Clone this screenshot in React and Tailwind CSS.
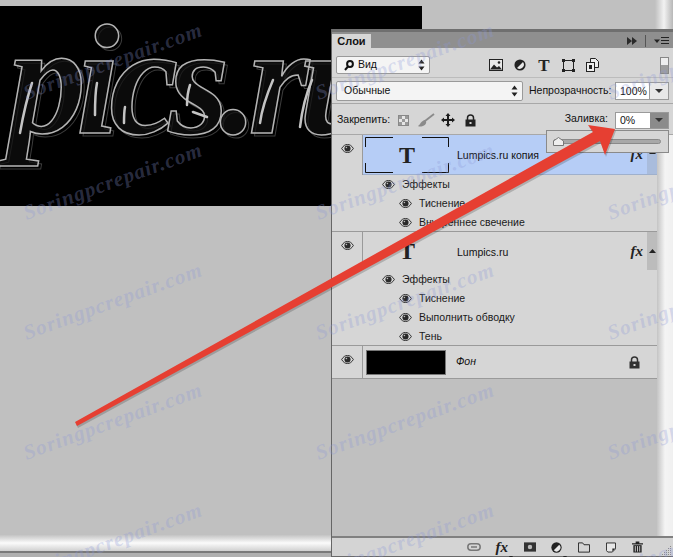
const FONT = "font-['Liberation_Sans',sans-serif]"

// watermark positions, it repeats over the whole shot
const marks = [
  [17, 7], [17, 127], [17, 247], [17, 367], [17, 487],
  [309, 7], [309, 127], [309, 247], [309, 367], [309, 487],
  [601, 7], [601, 127], [601, 247], [601, 367], [601, 487],
]

const Eye = () => (
  <svg width="13" height="9" viewBox="0 0 14 10" className="shrink-0">
    <path d="M0.5 5C2.5 1.6 4.8 0.5 7 0.5S11.5 1.6 13.5 5C11.5 8.4 9.2 9.5 7 9.5S2.5 8.4 0.5 5Z" fill="#d6d6d6" stroke="#222" strokeWidth="1" />
    <circle cx="7" cy="5" r="3.4" fill="#2a2a2a" />
    <circle cx="5.8" cy="3.9" r="0.9" fill="#bbb" />
  </svg>
)

const Stepper = () => (
  <svg width="7" height="12" viewBox="0 0 7 12" className="shrink-0">
    <path d="M3.5 0.5L6.5 4.5H0.5Z M3.5 11.5L0.5 7.5H6.5Z" fill="#222" />
  </svg>
)

const SmallDown = () => (
  <svg width="8" height="4" viewBox="0 0 8 4"><path d="M0 0H8L4 4Z" fill="#333" /></svg>
)

const Lock = ({ color = '#222' }) => (
  <svg width="11" height="13" viewBox="0 0 11 13">
    <path d="M2.5 6V3.8C2.5 2 3.8 1 5.5 1S8.5 2 8.5 3.8V6" fill="none" stroke={color} strokeWidth="1.5" />
    <rect x="0.5" y="5.5" width="10" height="7" fill={color} />
    <rect x="4.5" y="8" width="2" height="2" fill="#d6d6d6" />
  </svg>
)

const ThumbT = () => (
  <span className="font-['Liberation_Serif',serif] font-bold text-[24px] leading-none text-[#222]">T</span>
)

const Fx = () => (
  <span className="font-['Liberation_Serif',serif] italic font-bold text-[15px] leading-none text-[#222]">fx</span>
)

const Effect = ({ children, head }) => (
  <div className={`h-[19px] flex items-center gap-[7px] ${head ? 'pl-[50px]' : 'pl-[67px]'}`}>
    <Eye />
    <span className="text-[10.5px] text-[#1a1a1a] whitespace-nowrap">{children}</span>
  </div>
)

const EyeCell = () => (
  <div className="w-[31px] shrink-0 self-stretch border-r border-[#9a9a9a] flex justify-center pt-[9px]">
    <Eye />
  </div>
)

const Corners = () => (
  <svg className="absolute inset-0" width="84" height="36" viewBox="0 0 84 36" fill="none" stroke="#111" strokeWidth="1">
    <path d="M0.5 10V0.5H28 M57 0.5H83.5V10 M0.5 26V35.5H28 M57 35.5H83.5V26" />
  </svg>
)

export default function App() {
  return (
    <div className={`relative w-[673px] h-[557px] overflow-hidden flex bg-[#c0c0c0] ${FONT}`}>
      {/* document area */}
      <div className="w-[331px] shrink-0 pt-[6px]">
        <div className="relative w-[422px] h-[200px] bg-black overflow-hidden">
          <span className="absolute left-[11px] top-[-2px] font-['Liberation_Serif',serif] font-bold italic text-[156px] leading-[160px] tracking-[-10px] text-transparent whitespace-nowrap [-webkit-text-stroke:1px_#3c3c3c]">
            pics.ru
          </span>
          <span className="absolute left-[8px] top-[-5px] font-['Liberation_Serif',serif] font-bold italic text-[156px] leading-[160px] tracking-[-10px] text-[#101010]/70 whitespace-nowrap [-webkit-text-stroke:1.5px_#b4b4b4]">
            pics.ru
          </span>
          {/* glass highlights on the letters */}
          <svg className="absolute inset-0" width="422" height="200" viewBox="0 0 422 200" fill="none" stroke="#c4c4c4" strokeWidth="2.5" strokeLinecap="round">
            <path d="M32 77C27 92 23 110 20 127" />
            <path d="M97 77C95 87 95 98 95 109" />
            <path d="M125 101C124 106 124 112 124 117" />
            <path d="M193 106L207 111" />
            <path d="M190 79C188 85 187 92 187 99" />
            <path d="M273 74C267 88 262 102 260 117" />
            <path d="M312 74C306 88 302 104 300 121" />
          </svg>
        </div>
      </div>

      {/* doc scrollbars */}
      <div className="absolute left-0 top-[535px] w-[331px] h-[22px] flex flex-col">
        <div className="h-[16px] bg-gradient-to-b from-[#c4c4c4] via-[#fbfbfb] to-[#d0d0d0]" />
        <div className="h-[2px] bg-[#7a7a7a]" />
        <div className="flex-1 bg-[#b0b0b0]" />
      </div>
      <div className="absolute left-[655px] top-0 w-[18px] h-[29px] bg-gradient-to-r from-[#c0c0c0] via-[#f2f2f2] to-[#b8b8b8]" />

      {/* layers panel */}
      <div className="relative mt-[29px] w-[342px] h-[528px] flex flex-col border-l border-[#666] bg-[#d6d6d6] text-[#111]">
        <div className="h-[19px] shrink-0 flex flex-col bg-[#8f8f8f]">
          <div className="h-[3px] bg-[#6f6f6f]" />
          <div className="flex-1 flex items-end">
            <div className="w-[39px] h-[14px] mt-[2px] bg-[#d6d6d6] flex items-center justify-center text-[11px] font-bold leading-none">Слои</div>
            <div className="flex-1 flex items-center justify-end gap-[6px] pr-[3px] pb-[1px]">
              <svg width="10" height="8" viewBox="0 0 10 8"><path d="M0 0L5 4L0 8Z M5 0L10 4L5 8Z" fill="#2a2a2a" /></svg>
              <div className="w-px h-[12px] bg-[#555] mx-[2px]" />
              <svg width="15" height="8" viewBox="0 0 15 8" className="mr-[1px]"><path d="M0 2.5H6L3 6Z" fill="#222" /><path d="M7 .5H15M7 3.5H15M7 6.5H15" stroke="#222" strokeWidth="1.2" /></svg>
            </div>
          </div>
        </div>

        {/* filter row */}
        <div className="h-[30px] shrink-0 flex items-center pl-[4px] pr-[3px] pt-[5px] border-b border-[#bcbcbc]">
          <div className="w-[94px] h-[18px] rounded-[2px] bg-[#f4f4f4] border border-[#9a9a9a] flex items-center pl-[7px] pr-[4px] gap-[4px] text-[10.5px]">
            <svg width="10" height="11" viewBox="0 0 10 11" fill="none" stroke="#111" strokeWidth="2"><circle cx="6" cy="4" r="2.9" /><path d="M4 6.5L1 10" /></svg>
            <span className="flex-1">Вид</span>
            <Stepper />
          </div>
          <div className="ml-[59px] flex items-center gap-[11px]">
            <svg width="14" height="12" viewBox="0 0 14 12"><rect x="0.5" y="0.5" width="13" height="11" fill="#e8e8e8" stroke="#222" /><path d="M1 10.5L5 5.5L8 8.5L10 7L13 10.5Z" fill="#222" /><circle cx="10" cy="3.5" r="1.3" fill="#222" /></svg>
            <svg width="12" height="12" viewBox="0 0 14 14"><circle cx="7" cy="7" r="6.5" fill="#222" /><path d="M10.5 3.5A5 5 0 0 1 3.5 10.5Z" fill="#e8e8e8" /></svg>
            <span className="w-[14px] text-center font-['Liberation_Serif',serif] font-bold text-[17px] leading-none text-[#222]">T</span>
            <svg width="13" height="13" viewBox="0 0 13 13"><rect x="1.5" y="1.5" width="10" height="10" fill="none" stroke="#222" /><path d="M0 0H3V3H0Z M10 0H13V3H10Z M0 10H3V13H0Z M10 10H13V13H10Z" fill="#222" /></svg>
            <svg width="13" height="14" viewBox="0 0 13 14"><path d="M4.5 4V.5H9.5L12.5 3.5V9.5H8" fill="#eee" stroke="#222" /><rect x="0.5" y="4.5" width="8" height="9" fill="#eee" stroke="#222" /><rect x="3" y="7" width="3" height="4" fill="#222" /></svg>
          </div>
          <div className="ml-auto mr-[1px] w-[9px] h-[17px] flex flex-col border border-[#888]">
            <div className="h-[7px] bg-[#eee]" />
            <div className="flex-1 bg-[#9d9d9d]" />
          </div>
        </div>

        {/* blend mode row */}
        <div className="h-[26px] shrink-0 flex items-center pl-[4px] pr-[4px] pt-[1px] border-b border-[#a8a8a8]">
          <div className="w-[187px] h-[20px] rounded-[2px] bg-[#f4f4f4] border border-[#9a9a9a] flex items-center justify-between pl-[7px] pr-[4px] text-[10.5px]">
            <span>Обычные</span>
            <Stepper />
          </div>
          <span className="ml-[6px] text-[10.5px] whitespace-nowrap">Непрозрачность:</span>
          <div className="ml-auto h-[18px] w-[54px] flex border border-[#9a9a9a] bg-[#e8e8e8]">
            <span className="w-[34px] bg-white border-r border-[#9a9a9a] text-[10.5px] leading-[16px] pl-[4px]">100%</span>
            <span className="flex-1 flex items-center justify-center"><SmallDown /></span>
          </div>
        </div>

        {/* lock row */}
        <div className="h-[31px] shrink-0 flex items-center pl-[5px] pr-[4px] pt-[2px] border-b border-[#a8a8a8]">
          <span className="w-[52px] text-[10.5px] whitespace-nowrap">Закрепить:</span>
          <div className="ml-[9px] flex items-center">
            <svg width="11" height="11" viewBox="0 0 11 11" className="mr-[9px]"><rect x="0.5" y="0.5" width="10" height="10" fill="#e6e6e6" stroke="#888" /><path d="M1 1H4V4H1Z M7 1H10V4H7Z M4 4H7V7H4Z M1 7H4V10H1Z M7 7H10V10H7Z" fill="#9a9a9a" /></svg>
            <svg width="17" height="15" viewBox="0 0 17 15" className="mr-[6px]"><path d="M16 1L7 8" stroke="#8a8a8a" strokeWidth="1.8" /><path d="M7.5 7.5C9 9 8 12 5 13S1 13.5 0 13C2 12 2 10 4 8.5S6.5 6.5 7.5 7.5Z" fill="#8a8a8a" /></svg>
            <svg width="14" height="14" viewBox="0 0 14 14" className="mr-[10px]"><path d="M7 0L9.5 3H8V6H11V4.5L14 7L11 9.5V8H8V11H9.5L7 14L4.5 11H6V8H3V9.5L0 7L3 4.5V6H6V3H4.5Z" fill="#1c1c1c" /></svg>
            <Lock />
          </div>
          <span className="ml-auto mr-[7px] mb-[3px] text-[10.5px]">Заливка:</span>
          <div className="h-[17px] w-[54px] flex border border-[#9a9a9a] bg-[#8b8b8b]">
            <span className="w-[34px] bg-white text-[10.5px] leading-[15px] pl-[4px]">0%</span>
            <span className="flex-1 flex items-center justify-center"><SmallDown /></span>
          </div>
        </div>

        {/* layers */}
        <div className="flex-1 min-h-0 flex">
          <div className="w-[325px] shrink-0 bg-[#c0c0c0]">
            <div className="h-[97px] bg-[#d6d6d6] border-b border-[#9a9a9a]">
              <div className="h-[40px] flex items-stretch">
                <EyeCell />
                <div className="flex-1 flex items-center bg-[#b6cdf6] pl-[2px] border-b border-[#9fb0cc]">
                  <div className="relative w-[84px] h-[36px] flex items-center justify-center"><Corners /><ThumbT /></div>
                  <span className="ml-[8px] flex-1 text-[10.5px] pt-[2px]">Lumpics.ru копия</span>
                  <Fx />
                  <div className="ml-[4px] w-[10px] self-stretch bg-[#a9bcdc] flex justify-center pt-[15px]">
                    <svg width="7" height="4" viewBox="0 0 7 4"><path d="M3.5 0L7 4H0Z" fill="#222" /></svg>
                  </div>
                </div>
              </div>
              <Effect head>Эффекты</Effect>
              <Effect>Тиснение</Effect>
              <Effect>Внутреннее свечение</Effect>
            </div>

            <div className="h-[114px] bg-[#d6d6d6] border-b border-[#9a9a9a]">
              <div className="h-[38px] flex items-stretch">
                <EyeCell />
                <div className="flex-1 flex items-center pl-[2px]">
                  <div className="w-[84px] h-[36px] flex items-center justify-center"><ThumbT /></div>
                  <span className="ml-[8px] flex-1 text-[10.5px] pt-[3px]">Lumpics.ru</span>
                  <Fx />
                  <div className="ml-[4px] w-[10px] self-stretch bg-[#bcbcbc] flex justify-center pt-[17px]">
                    <svg width="7" height="4" viewBox="0 0 7 4"><path d="M3.5 0L7 4H0Z" fill="#222" /></svg>
                  </div>
                </div>
              </div>
              <Effect head>Эффекты</Effect>
              <Effect>Тиснение</Effect>
              <Effect>Выполнить обводку</Effect>
              <Effect>Тень</Effect>
            </div>

            <div className="h-[33px] bg-[#d6d6d6] border-b border-[#9a9a9a] flex items-stretch">
              <EyeCell />
              <div className="flex-1 flex items-center pl-[3px] pr-[17px]">
                <div className="w-[80px] h-[25px] bg-black border border-[#777]" />
                <span className="ml-[10px] flex-1 italic text-[10.5px]">Фон</span>
                <Lock color="#333" />
              </div>
            </div>
          </div>
          <div className="flex-1 bg-gradient-to-r from-[#c4c4c4] via-[#f4f4f4] to-[#f0f0f0]" />
        </div>

        {/* bottom bar */}
        <div className="relative h-[21px] shrink-0 border-t-2 border-b border-t-[#808080] border-b-[#6a6a6a] bg-[#d4d4d4] flex items-center justify-end pr-[30px]">
          <div className="flex items-center">
            <svg width="14" height="8" viewBox="0 0 14 8" fill="none" stroke="#777" strokeWidth="1.5" className="mr-[15px]"><rect x="0.8" y="0.8" width="12.4" height="6.4" rx="3.2" /><path d="M4 4H10" /></svg>
            <span className="mr-[1px]"><Fx /></span>
            <svg width="4" height="3" viewBox="0 0 4 3" className="self-end mr-[11px]"><path d="M0 0H4L2 3Z" fill="#222" /></svg>
            <svg width="12" height="10" viewBox="0 0 13 10" className="mr-[15px]"><rect width="13" height="10" fill="#333" /><circle cx="6.5" cy="5" r="2.4" fill="#bbb" /></svg>
            <svg width="11" height="11" viewBox="0 0 12 12" className="mr-[1px]"><circle cx="6" cy="6" r="5.6" fill="#222" /><path d="M9 3A4.2 4.2 0 0 1 3 9Z" fill="#e8e8e8" /></svg>
            <svg width="4" height="3" viewBox="0 0 4 3" className="self-end mr-[11px]"><path d="M0 0H4L2 3Z" fill="#222" /></svg>
            <svg width="12" height="11" viewBox="0 0 13 11" className="mr-[16px]"><path d="M0.5 10.5V0.5H5L6.5 2.5H12.5V10.5Z" fill="#d4d4d4" stroke="#222" /></svg>
            <svg width="10" height="11" viewBox="0 0 11 11" className="mr-[16px]"><path d="M0.5 0.5H10.5V7L7 10.5H2L0.5 9Z" fill="#e6e6e6" stroke="#222" /><path d="M7 6.5H10L7 10Z" fill="#222" /></svg>
            <svg width="11" height="12" viewBox="0 0 12 12"><path d="M0 2H12V3.4H0Z M4 0H8V2H4Z" fill="#222" /><path d="M1.5 4H10.5V12H1.5Z" fill="#222" /><path d="M3.6 5V11M6 5V11M8.4 5V11" stroke="#d4d4d4" /></svg>
          </div>
          {/* resize grip */}
          <svg width="10" height="10" viewBox="0 0 10 10" fill="#8a8a8a" className="absolute right-[1px] bottom-0">
            <path d="M8 0h1v1H8Z M6 2h1v1H6Z M8 2h1v1H8Z M4 4h1v1H4Z M6 4h1v1H6Z M8 4h1v1H8Z M2 6h1v1H2Z M4 6h1v1H4Z M6 6h1v1H6Z M8 6h1v1H8Z M0 8h1v1H0Z M2 8h1v1H2Z M4 8h1v1H4Z M6 8h1v1H6Z M8 8h1v1H8Z" />
          </svg>
        </div>
      </div>

      {/* fill slider popup */}
      <div className="absolute left-[546px] top-[130px] w-[123px] h-[23px] bg-[#d6d6d6] border border-[#8a8a8a] flex items-center pl-[6px] pr-[7px]">
        <div className="relative flex-1 h-[5px] rounded-full bg-[#a8a8a8] border border-[#8a8a8a]">
          <svg width="11" height="9" viewBox="0 0 11 9" className="absolute left-[-1px] top-[-3px]"><path d="M0.5 8.5V4L5.5 0.5L10.5 4V8.5Z" fill="#eee" stroke="#777" /></svg>
        </div>
      </div>

      {/* red arrow drawn over the shot */}
      <svg className="absolute inset-0 pointer-events-none" width="673" height="557" viewBox="0 0 673 557">
        <path d="M75 422L593 132L588 125L615 129L605 155L600 141L77 426Z" fill="#000" opacity="0.18" transform="translate(1 2)" />
        <path d="M75 422L593 132L588 125L615 129L605 155L600 141L77 426Z" fill="#e63f32" />
      </svg>

      {/* watermark */}
      {marks.map(([x, y], i) => (
        <span
          key={i}
          className="absolute w-[192px] text-center -rotate-[20deg] pointer-events-none font-['Liberation_Serif',serif] italic font-bold text-[21px] leading-none tracking-[1px] whitespace-nowrap text-[#8c98d8]/30"
          style={{ left: x, top: y + 44 }}
        >
          Soringpcrepair.com
        </span>
      ))}
    </div>
  )
}
